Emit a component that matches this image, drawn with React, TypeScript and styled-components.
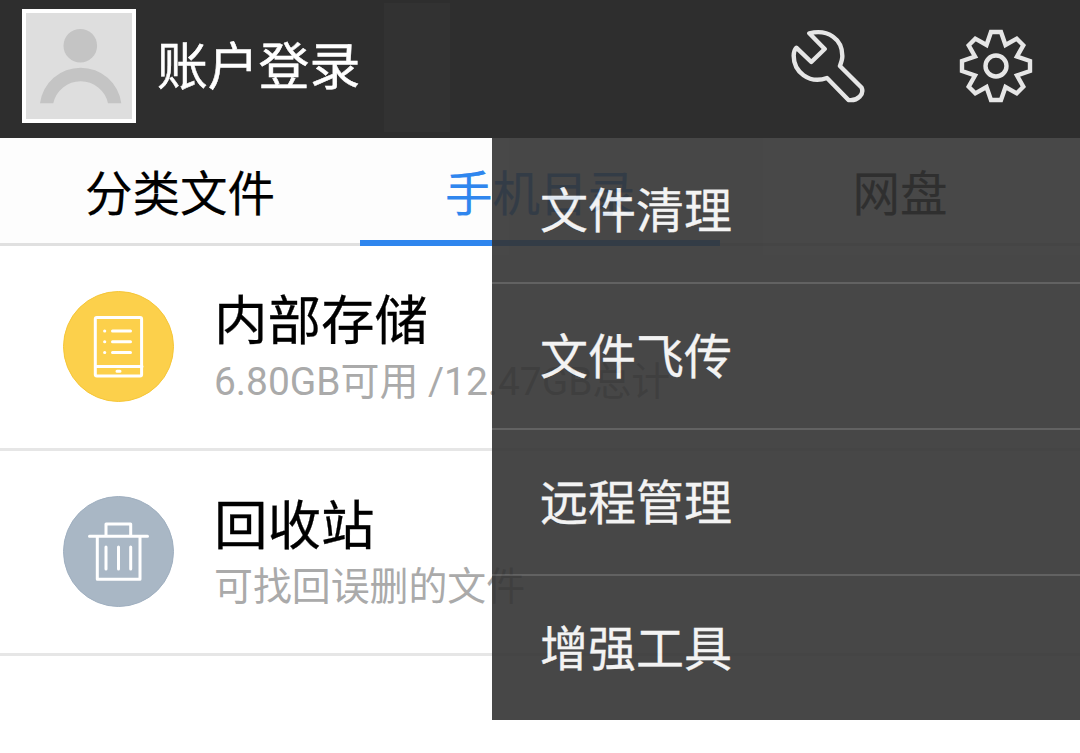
import React, { ReactNode } from "react";
import styled, { createGlobalStyle } from "styled-components";

const GlobalStyle = createGlobalStyle`
  body {
    margin: 0;
    background: #fff;
    font-family: Roboto, "Noto Sans CJK SC", sans-serif;
  }
`;

const Page = styled.div`
  width: 1080px;
  height: 753px;
  overflow: hidden;
  background: #fff;
`;

const Header = styled.header`
  display: flex;
  align-items: flex-start;
  box-sizing: border-box;
  height: 138px;
  padding: 0 46px 0 22px;
  background: #2e2e2e;
`;

const Avatar = styled.div`
  box-sizing: border-box;
  width: 114px;
  height: 114px;
  margin-top: 9px;
  border: 4px solid #fff;
  background: #dedede;
`;

const Account = styled.div`
  width: 227px;
  margin-left: 21px;
  line-height: 136px;
  font-size: 50.8px;
  white-space: nowrap;
  color: #fff;
  -webkit-text-stroke: 0.5px;
`;

const Shade = styled.div`
  width: 66px;
  height: 129px;
  margin-top: 3px;
  background: #323232;
`;

const Actions = styled.div`
  display: flex;
  gap: 92px;
  margin: 28px 0 0 auto;
  svg {
    display: block;
  }
`;

const Body = styled.main`
  position: relative;
`;

const Tabs = styled.nav`
  display: flex;
  height: 108px;
  background: #fdfdfd;
`;

const Tab = styled.div<{ $active?: boolean }>`
  flex: 1;
  box-sizing: border-box;
  height: 108px;
  border-bottom: ${(p) => (p.$active ? "6px solid #2f86ee" : "3px solid #e0e0e0")};
  line-height: 114px;
  font-size: 47.5px;
  text-align: center;
  color: ${(p) => (p.$active ? "#2f86ee" : "#000")};
  -webkit-text-stroke: 0.2px;
`;

const Row = styled.div`
  display: flex;
  box-sizing: border-box;
  height: 205px;
  padding: 45px 0 0 63px;
  border-bottom: 3px solid #e6e6e6;
`;

const RowIcon = styled.div<{ $color: string; $edge: string }>`
  box-sizing: border-box;
  width: 111px;
  height: 111px;
  border: 1px solid ${(p) => p.$edge};
  border-radius: 50%;
  background: ${(p) => p.$color};
  svg {
    display: block;
    margin: -1px;
  }
`;

const RowText = styled.div`
  margin-left: 40px;
  white-space: nowrap;
`;

const Title = styled.div`
  height: 60px;
  line-height: 61px;
  font-size: 53.5px;
  color: #000;
  -webkit-text-stroke: 0.3px;
`;

const Sub = styled.div`
  height: 60px;
  line-height: 62px;
  font-size: 38.9px;
  color: #aaa;
`;

const Menu = styled.div`
  position: absolute;
  top: 0;
  right: 0;
  width: 588px;
  background: #343434;
  opacity: 0.9;
`;

const MenuItem = styled.div`
  height: 144px;
  padding-left: 48px;
  line-height: 148px;
  font-size: 48px;
  color: #f2f2f2;
  -webkit-text-stroke: 0.3px;
  & + & {
    border-top: 2px solid #525252;
  }
`;

const Person = () => (
  <svg width="106" height="106" viewBox="4 4 106 106" fill="#c4c4c4">
    <circle cx="58.3" cy="36.7" r="16.8" />
    <path d="M18 94.3A41 41 0 0 1 99.3 94.3H86A28 28 0 0 0 31.3 94.3Z" />
  </svg>
);

const Wrench = () => (
  <svg width="76" height="76" viewBox="0 0 76 76" fill="none" stroke="#e6e6e6" strokeWidth="4.4" strokeLinejoin="round">
    <path d="M19.3 5.3C38 .8 53 11 52.3 29C52.2 32 51 35 49.9 38L71.5 59.500C74.500 66 68 73.200 58.500 72L37 50C19 56.500 3.500 43.500 3.700 27.500C3.800 24 4.500 21.500 6.300 19.700L21.300 34L34.700 21Z" />
  </svg>
);

const Gear = () => (
  <svg width="76" height="76" viewBox="-38 -38 76 76" fill="none" stroke="#e6e6e6" strokeWidth="4.4">
    <path d="M-5-34H5L9.500-21L20.700-27.300L27.300-20.700L21-9.500L34-5V5L21 9.500L27.300 20.700L20.700 27.300L9.500 21L5 34H-5L-9.500 21L-20.700 27.300L-27.300 20.700L-21 9.500L-34 5V-5L-21-9.500L-27.300-20.700L-20.700-27.300L-9.500-21Z" />
    <circle r="10.500" />
  </svg>
);

const Tablet = () => (
  <svg width="111" height="111" viewBox="0 0 111 111" fill="none" stroke="#fff" strokeWidth="3" strokeLinecap="round">
    <rect x="32.300" y="26.500" width="46.300" height="58.500" rx="1.500" />
    <path d="M33 75.500H79M49.500 40H67.500M49.500 50.700H67.500M49.500 61.500H67.500M41.600 40h.2M41.600 50.700h.2M41.600 61.500h.2M54 80.200H57" />
  </svg>
);

const Trash = () => (
  <svg width="111" height="111" viewBox="0 0 111 111" fill="none" stroke="#fff" strokeWidth="3" strokeLinecap="round" strokeLinejoin="round">
    <path d="M26.500 40.200H84.500M43 40V27.900H67.700V40M34.300 41V83.200H77V41M43 51V73M55.500 51V73M67.700 51V73" />
  </svg>
);

interface FileRowProps {
  icon: ReactNode;
  color: string;
  edge: string;
  title: string;
  sub: string;
}

function FileRow(p: FileRowProps) {
  return (
    <Row>
      <RowIcon $color={p.color} $edge={p.edge}>
        {p.icon}
      </RowIcon>
      <RowText>
        <Title>{p.title}</Title>
        <Sub>{p.sub}</Sub>
      </RowText>
    </Row>
  );
}

const menu = ["文件清理", "文件飞传", "远程管理", "增强工具"];

export default function App() {
  return (
    <Page>
      <GlobalStyle />
      <Header>
        <Avatar>
          <Person />
        </Avatar>
        <Account>账户登录</Account>
        <Shade />
        <Actions>
          <Wrench />
          <Gear />
        </Actions>
      </Header>
      <Body>
        <Tabs>
          <Tab>分类文件</Tab>
          <Tab $active>手机目录</Tab>
          <Tab>网盘</Tab>
        </Tabs>
        <FileRow icon={<Tablet />} color="#fcd04b" edge="#f6c637" title="内部存储" sub="6.80GB可用 /12.47GB总计" />
        <FileRow icon={<Trash />} color="#a9b7c5" edge="#9fafc0" title="回收站" sub="可找回误删的文件" />
        <Menu>
          {menu.map((item) => (
            <MenuItem key={item}>{item}</MenuItem>
          ))}
        </Menu>
      </Body>
    </Page>
  );
}
